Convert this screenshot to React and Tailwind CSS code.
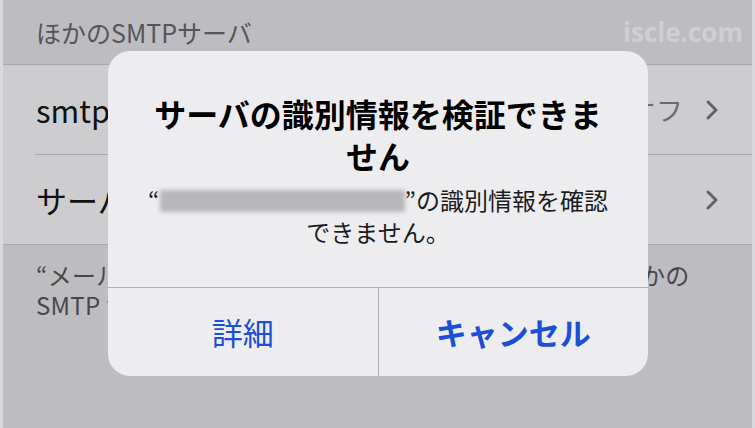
import React from "react"

const jp = { fontFamily: '"Noto Sans CJK JP", "Noto Sans", sans-serif' }

function Chevron() {
    return (
        <svg width="14" height="22" viewBox="0 0 14 22" className="shrink-0">
            <polyline points="3,3 11,11 3,19" fill="none" stroke="#636366" strokeWidth="3" strokeLinecap="round" strokeLinejoin="round" />
        </svg>
    )
}

export default function App() {
    return (
        <div className="relative w-[755px] h-[428px] overflow-hidden flex bg-[#d9d9db]" style={jp}>

            {/* Settings page (dimmed) */}
            <div className="ml-[3px] mr-[3px] flex-1 flex flex-col bg-[#bdbdc1] overflow-hidden">

                {/* Section header */}
                <div className="h-[65px] flex items-center justify-between pl-[33px] pr-[9px] border-b border-[#a9a9ad]">
                    <span className="text-[25px] text-[#55555a] leading-none">ほかのSMTPサーバ</span>
                    <span className="text-[26px] font-bold text-white/30 leading-none" style={{ fontFamily: '"Open Sans", sans-serif' }}>iscle.com</span>
                </div>

                {/* Rows */}
                <div className="bg-[#cdcdd0] border-b border-[#a9a9ad]">
                    <div className="h-[89px] flex items-center pl-[33px] pr-[33px]">
                        <span className="flex-1 text-[31px] text-[#111] leading-none">smtp.example.com</span>
                        <span className="text-[27px] text-[#6c6c70] mr-[22px] leading-none">オフ</span>
                        <Chevron />
                    </div>
                    <div className="ml-[32px] border-t border-[#a9a9ad]" />
                    <div className="h-[89px] flex items-center pl-[33px] pr-[33px]">
                        <span className="flex-1 text-[31px] text-[#111] leading-none">サーバ</span>
                        <Chevron />
                    </div>
                </div>

                {/* Footer */}
                <p className="pl-[33px] pt-[15px] text-[24px] leading-[30px] tracking-[0.25px] text-[#48484c] whitespace-nowrap">
                    “メール”は、プライマリサーバが利用できない場合にほかの<br />SMTP サーバを順番に試します。
                </p>
            </div>

            {/* Alert */}
            <div className="absolute left-[108px] top-[51px] w-[540px] rounded-[22px] bg-[#ededf0] flex flex-col overflow-hidden">
                <div className="pt-[41px] pb-[39px] px-[20px] text-center">
                    <h1 className="text-[32px] font-bold leading-[42px] text-black whitespace-nowrap">
                        サーバの識別情報を検証できま<br />せん
                    </h1>
                    <p className="mt-[8px] text-[24px] leading-[32px] text-[#1c1c1e]">
                        “<span className="inline-block align-middle w-[245px] h-[22px] bg-[#b7b7ba] blur-[2px] -mt-[4px]" />”の識別情報を確認<br />できません。
                    </p>
                </div>
                <div className="flex h-[89px] border-t border-[#b3b3b7]">
                    <button className="flex-1 flex items-center justify-center text-[31px] text-[#1a4fd6] border-r border-[#b3b3b7]">
                        詳細
                    </button>
                    <button className="flex-1 flex items-center justify-center text-[31px] font-bold text-[#1a4fd6]">
                        キャンセル
                    </button>
                </div>
            </div>

        </div>
    )
}
